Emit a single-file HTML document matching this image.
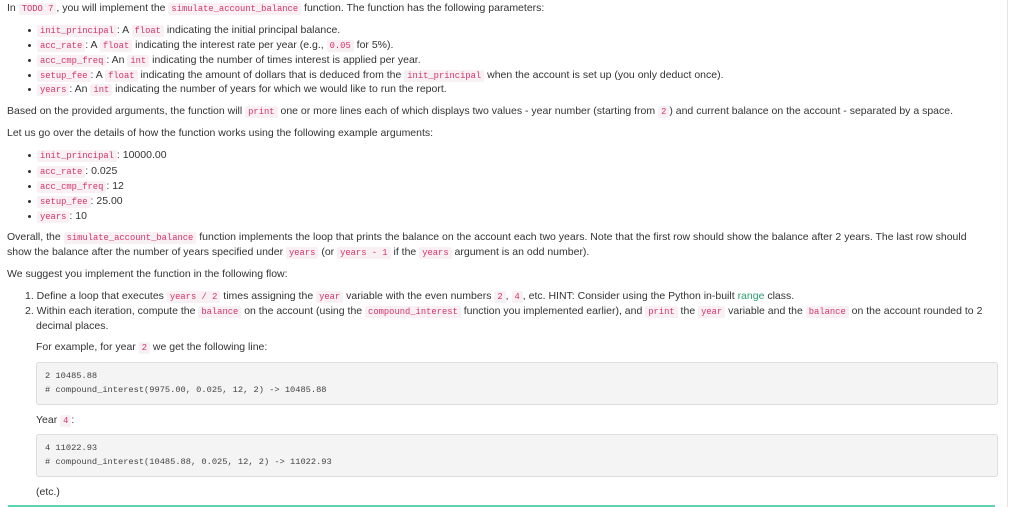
<!DOCTYPE html>
<html><head><meta charset="utf-8"><style>
body{margin:0;width:1024px;height:507px;background:#fff;overflow:hidden;position:relative;font-family:"Liberation Sans",sans-serif;font-size:10.5px;color:#333}
.l{position:absolute;white-space:nowrap;line-height:14px}
code{font-family:"Liberation Mono",monospace;font-size:8.8px;color:#d6336c;background:#f8f0f2;padding:1px 3px;border-radius:2px}
.b{position:absolute;width:3px;height:3px;border-radius:50%;background:#333}
.box{position:absolute;left:36px;width:960px;background:#f4f4f4;border:1px solid #ddd;border-radius:3px}
.box div{position:absolute;left:8px;font-family:"Liberation Mono",monospace;font-size:8.7px;color:#444;white-space:nowrap}
.vl{position:absolute;left:1007px;top:0;width:1px;height:507px;background:#e4e4e4}
</style></head><body>
<div class="vl"></div>
<div class="l" style="left:7px;top:1px">In <code>TODO 7</code>, you will implement the <code>simulate_account_balance</code> function. The function has the following parameters:</div>
<div class="b" style="left:28px;top:29px"></div><div class="l" style="left:37px;top:23px"><code>init_principal</code>: A <code>float</code> indicating the initial principal balance.</div>
<div class="b" style="left:28px;top:44px"></div><div class="l" style="left:37px;top:38px"><code>acc_rate</code>: A <code>float</code> indicating the interest rate per year (e.g., <code>0.05</code> for 5%).</div>
<div class="b" style="left:28px;top:59px"></div><div class="l" style="left:37px;top:53px"><code>acc_cmp_freq</code>: An <code>int</code> indicating the number of times interest is applied per year.</div>
<div class="b" style="left:28px;top:74px"></div><div class="l" style="left:37px;top:68px"><code>setup_fee</code>: A <code>float</code> indicating the amount of dollars that is deduced from the <code>init_principal</code> when the account is set up (you only deduct once).</div>
<div class="b" style="left:28px;top:88px"></div><div class="l" style="left:37px;top:82px"><code>years</code>: An <code>int</code> indicating the number of years for which we would like to run the report.</div>
<div class="l" style="left:7px;top:104px">Based on the provided arguments, the function will <code>print</code> one or more lines each of which displays two values - year number (starting from <code>2</code>) and current balance on the account - separated by a space.</div>
<div class="l" style="left:7px;top:126px">Let us go over the details of how the function works using the following example arguments:</div>
<div class="b" style="left:28px;top:154px"></div><div class="l" style="left:37px;top:148px"><code>init_principal</code>: 10000.00</div>
<div class="b" style="left:28px;top:170px"></div><div class="l" style="left:37px;top:164px"><code>acc_rate</code>: 0.025</div>
<div class="b" style="left:28px;top:185px"></div><div class="l" style="left:37px;top:179px"><code>acc_cmp_freq</code>: 12</div>
<div class="b" style="left:28px;top:200px"></div><div class="l" style="left:37px;top:194px"><code>setup_fee</code>: 25.00</div>
<div class="b" style="left:28px;top:215px"></div><div class="l" style="left:37px;top:209px"><code>years</code>: 10</div>
<div class="l" style="left:7px;top:230px">Overall, the <code>simulate_account_balance</code> function implements the loop that prints the balance on the account each two years. Note that the first row should show the balance after 2 years. The last row should</div>
<div class="l" style="left:7px;top:245px">show the balance after the number of years specified under <code>years</code> (or <code>years - 1</code> if the <code>years</code> argument is an odd number).</div>
<div class="l" style="left:7px;top:267px">We suggest you implement the function in the following flow:</div>
<div class="l" style="left:25px;top:289px">1. Define a loop that executes <code>years / 2</code> times assigning the <code>year</code> variable with the even numbers <code>2</code>, <code>4</code>, etc. HINT: Consider using the Python in-built <span style="color:#2a9d6f">range</span> class.</div>
<div class="l" style="left:25px;top:304px">2. Within each iteration, compute the <code>balance</code> on the account (using the <code>compound_interest</code> function you implemented earlier), and <code>print</code> the <code>year</code> variable and the <code>balance</code> on the account rounded to 2</div>
<div class="l" style="left:36px;top:319px">decimal places.</div>
<div class="l" style="left:36px;top:340px">For example, for year <code>2</code> we get the following line:</div>
<div class="box" style="top:362px;height:41px"><div style="top:8px">2 10485.88</div><div style="top:22px"># compound_interest(9975.00, 0.025, 12, 2) -&gt; 10485.88</div></div>
<div class="l" style="left:36px;top:413px">Year <code>4</code>:</div>
<div class="box" style="top:434px;height:41px"><div style="top:8px">4 11022.93</div><div style="top:22px"># compound_interest(10485.88, 0.025, 12, 2) -&gt; 11022.93</div></div>
<div class="l" style="left:36px;top:485px">(etc.)</div>
<div style="position:absolute;left:8px;top:505px;width:987px;height:2px;background:#5fd3b0"></div>
</body></html>
